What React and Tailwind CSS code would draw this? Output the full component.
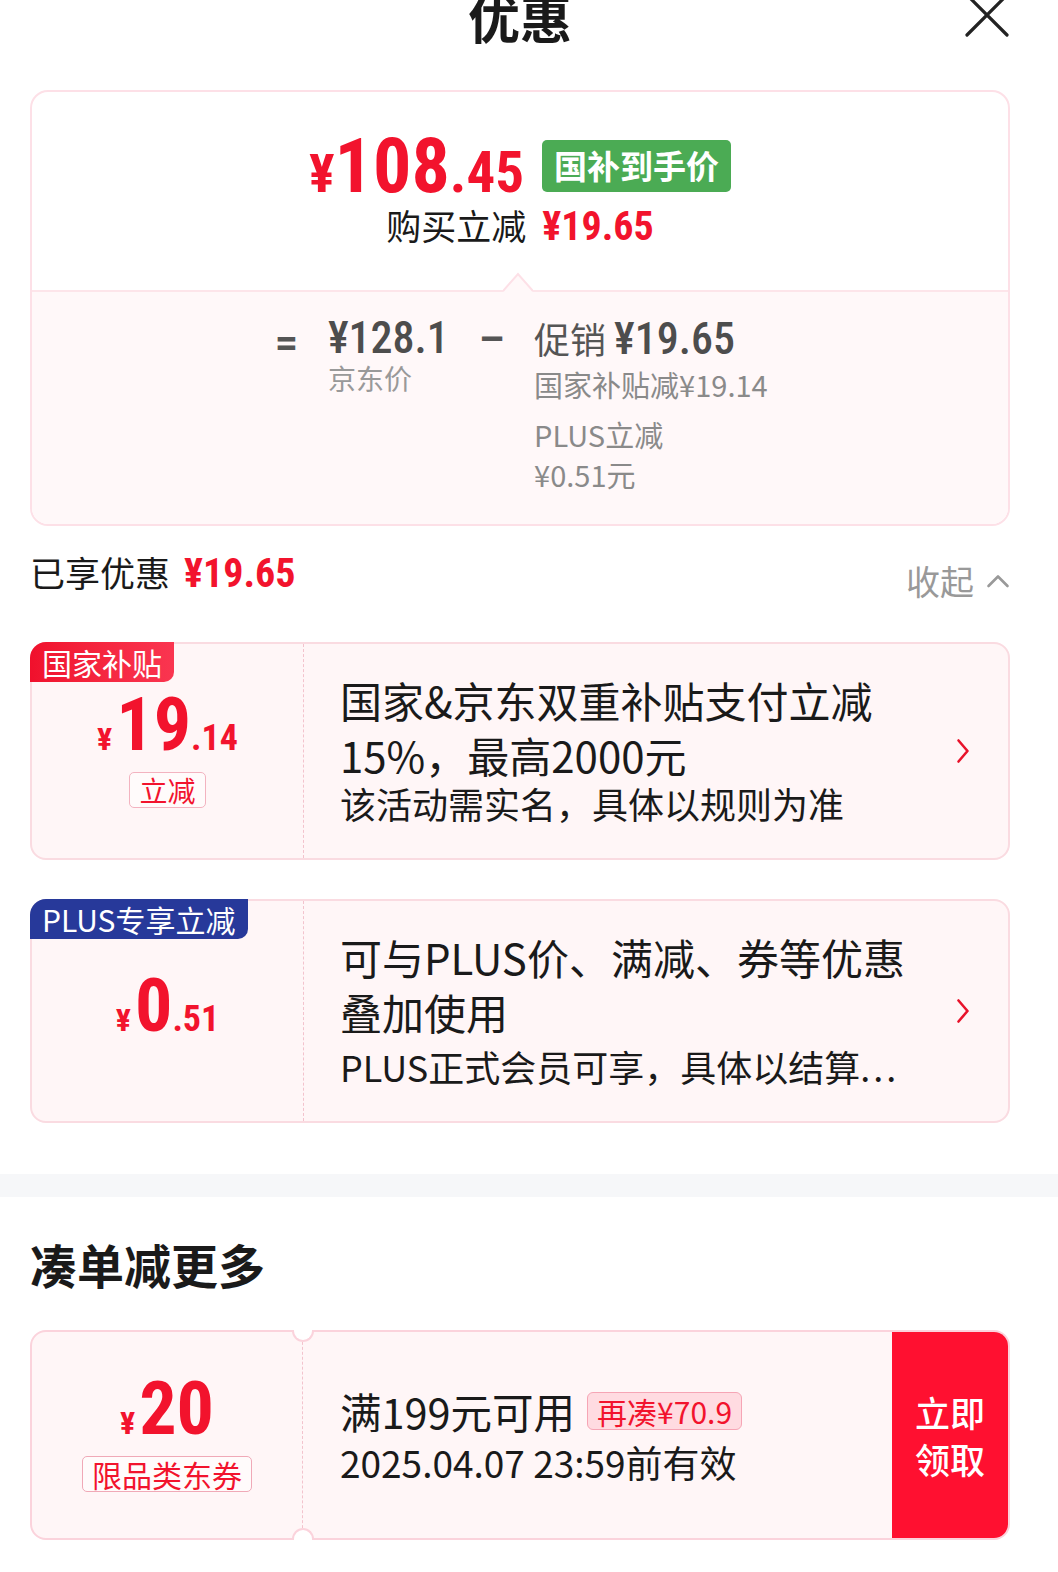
import React from 'react';

const num = "font-['Roboto_Condensed',Roboto,sans-serif]";

function ChevronRight() {
  return (
    <svg width="14" height="26" viewBox="0 0 14 26" fill="none">
      <path d="M2.5 2.5 L11.5 13 L2.5 23.5" stroke="#e8132b" strokeWidth="2.6" strokeLinecap="round" strokeLinejoin="round" />
    </svg>
  );
}

function PromoCard({ tag, tagBg, intPart, decPart, showTag, lines, lastGap, leftPt }) {
  return (
    <div className="relative flex rounded-[16px] border-2 border-[#fadbe1] bg-[#fff6f7]">
      {/* corner label */}
      <div className={`absolute -left-[2px] -top-[2px] h-[40px] rounded-tl-[16px] rounded-br-[10px] px-[12px] text-[30px] leading-[40px] text-white ${tagBg}`}>
        {tag}
      </div>
      <div className={`flex w-[272px] flex-col items-center border-r border-dashed border-[#f3c3cd] ${leftPt}`}>
        <div className={`${num} font-bold leading-[60px] text-[#f2132d]`}>
          <span className="text-[32px]">¥</span>
          <span className="ml-[4px] text-[74px]">{intPart}</span>
          <span className="text-[36px]">{decPart}</span>
        </div>
        {showTag && (
          <div className="-mt-[3px] rounded-[5px] border border-[#f3b3c0] bg-white/50 px-[9px] text-[28px] leading-[34px] text-[#f2132d]">
            立减
          </div>
        )}
      </div>
      <div className="flex flex-1 items-center pl-[36px] pr-[38px]">
        <div className="flex-1 pb-[34px] pt-[28px] text-[#1a1a1a]">
          <div className="text-[42px] leading-[55px]">{lines[0]}</div>
          <div className="text-[42px] leading-[55px]">{lines[1]}</div>
          <div className={`whitespace-nowrap text-[36px] leading-[42px] ${lastGap}`}>{lines[2]}</div>
        </div>
        <ChevronRight />
      </div>
    </div>
  );
}

export default function App() {
  return (
    <div className="min-h-screen overflow-hidden bg-white font-['Noto_Sans_CJK_SC','Noto_Sans',sans-serif] text-[#1a1a1a]">
      <div className="pl-[30px] pr-[48px]">
        {/* header */}
        <div className="grid h-[90px] grid-cols-[1fr_auto_1fr] items-start">
          <div />
          <div className="-mt-[9px] text-[52px] font-bold leading-[52px] text-[#1a1a1a]">优惠</div>
          <div className="flex justify-end">
            <svg className="-mt-[8px]" width="46" height="46" viewBox="0 0 46 46" fill="none">
              <path d="M3 3 L43 43 M43 3 L3 43" stroke="#222" strokeWidth="3.2" strokeLinecap="round" />
            </svg>
          </div>
        </div>

        {/* price breakdown card */}
        <div className="rounded-[18px] border-2 border-[#fde0e7]">
          <div className="flex h-[198px] flex-col items-center pt-[48px]">
            <div className="flex h-[52px] items-center">
              <span className={`${num} font-bold leading-none text-[#f2132d]`}>
                <span className="text-[54px]">¥</span>
                <span className="text-[76px]">108</span>
                <span className="text-[57px]">.45</span>
              </span>
              <span className="ml-[18px] flex h-[52px] items-center rounded-[5px] bg-[#4bab54] px-[12px] text-[33px] font-bold text-white">
                国补到手价
              </span>
            </div>
            <div className="mt-[13px] flex items-baseline leading-[40px]">
              <span className="text-[35px]">购买立减</span>
              <span className={`${num} ml-[16px] text-[40px] font-bold text-[#f2132d]`}>¥19.65</span>
            </div>
          </div>
          <div className="relative rounded-b-[16px] border-t-2 border-[#fde5ea] bg-[#fff8f9] pb-[30px] pl-[243px] pt-[24px]">
            <svg className="absolute -top-[20px] left-[471px]" width="30" height="20" viewBox="0 0 30 20">
              <path d="M0 20 L15 2 L30 20 Z" fill="#fff8f9" />
              <path d="M0 19 L15 2 L30 19" fill="none" stroke="#fde0e7" strokeWidth="2" />
            </svg>
            <div className="flex items-start">
              <span className="mt-[5px] font-['Roboto',sans-serif] text-[40px] font-bold leading-[44px] text-[#555]">=</span>
              <div className="ml-[30px] flex flex-col">
                <span className={`${num} text-[44px] font-medium leading-[44px] text-[#4d4d4d]`}>¥128.1</span>
                <span className="text-[28px] leading-[36px] text-[#999]">京东价</span>
              </div>
              <span className="ml-[30px] mt-[2px] font-['Roboto',sans-serif] text-[40px] font-bold leading-[44px] text-[#555]">–</span>
              <div className="ml-[30px] flex flex-col">
                <div className="flex items-baseline leading-[44px]">
                  <span className="text-[36px] text-[#555]">促销</span>
                  <span className={`${num} ml-[8px] text-[44px] font-medium text-[#4d4d4d]`}>¥19.65</span>
                </div>
                <span className="mt-[3px] text-[29px] leading-[40px] text-[#8a8a8a]">国家补贴减¥19.14</span>
                <span className="mt-[10px] text-[29px] leading-[40px] text-[#8a8a8a]">PLUS立减</span>
                <span className="text-[29px] leading-[40px] text-[#8a8a8a]">¥0.51元</span>
              </div>
            </div>
          </div>
        </div>

        {/* enjoyed discount */}
        <div className="mt-[26px] flex items-start justify-between">
          <div className="flex items-baseline leading-[40px]">
            <span className="text-[35px]">已享优惠</span>
            <span className={`${num} ml-[14px] text-[40px] font-bold text-[#f2132d]`}>¥19.65</span>
          </div>
          <div className="mt-[9px] flex items-center">
            <span className="text-[34px] leading-[40px] text-[#999]">收起</span>
            <svg className="ml-[12px]" width="24" height="16" viewBox="0 0 24 16" fill="none">
              <path d="M2.5 13 L12 3.5 L21.5 13" stroke="#999" strokeWidth="2.6" strokeLinecap="round" strokeLinejoin="round" />
            </svg>
          </div>
        </div>

        <div className="mt-[41px] flex flex-col gap-[39px]">
          <PromoCard
            tag="国家补贴"
            tagBg="bg-gradient-to-r from-[#f0102c] to-[#fa3550]"
            intPart="19"
            decPart=".14"
            showTag
            leftPt="pt-[51px]"
            lastGap=""
            lines={['国家&京东双重补贴支付立减', '15%，最高2000元', '该活动需实名，具体以规则为准']}
          />
          <PromoCard
            tag="PLUS专享立减"
            tagBg="bg-[#27399a]"
            intPart="0"
            decPart=".51"
            leftPt="pt-[75px]"
            lastGap="mt-[6px]"
            lines={[
              '可与PLUS价、满减、券等优惠',
              '叠加使用',
              <>PLUS正式会员可享，具体以结算<span className="tracking-[3px]">...</span></>,
            ]}
          />
        </div>
      </div>

      <div className="mt-[51px] h-[23px] bg-[#f6f7f9]" />

      <div className="pl-[30px] pr-[48px]">
        <div className="mt-[39px] text-[47px] font-bold leading-[56px]">凑单减更多</div>

        {/* coupon */}
        <div className="relative mt-[38px] flex rounded-[16px] border-2 border-[#fbd3dc] bg-[#fff6f7]">
          <div className="absolute -top-[2px] left-[260px] h-[12px] w-[22px] rounded-b-full border-2 border-t-0 border-[#fbd3dc] bg-white" />
          <div className="absolute -bottom-[2px] left-[260px] h-[12px] w-[22px] rounded-t-full border-2 border-b-0 border-[#fbd3dc] bg-white" />
          <div className="flex w-[271px] flex-col items-center border-r border-dashed border-[#f3c3cd] pb-[46px] pt-[47px]">
            <div className={`${num} font-bold leading-[60px] text-[#f2132d]`}>
              <span className="text-[32px]">¥</span>
              <span className="ml-[4px] text-[74px]">20</span>
            </div>
            <div className="-mt-[3px] rounded-[5px] border border-[#f0a9b7] bg-white/50 px-[9px] text-[30px] leading-[34px] text-[#f2132d]">
              限品类东券
            </div>
          </div>
          <div className="flex flex-1 flex-col justify-center pl-[37px]">
            <div className="flex items-center leading-[48px]">
              <span className="text-[41.5px]">满199元可用</span>
              <span className="ml-[12px] flex h-[38px] items-center rounded-[6px] border border-[#f6a5b5] bg-[#ffdbe1] px-[9px] text-[30px] text-[#f2132d]">
                再凑¥70.9
              </span>
            </div>
            <div className="mt-[5px] text-[37px] leading-[44px]">2025.04.07 23:59前有效</div>
          </div>
          <div className="flex w-[116px] flex-col items-center justify-center rounded-r-[14px] bg-[#ff1030] text-[35px] font-medium leading-[47px] text-white">
            <span>立即</span>
            <span>领取</span>
          </div>
        </div>
      </div>
    </div>
  );
}
